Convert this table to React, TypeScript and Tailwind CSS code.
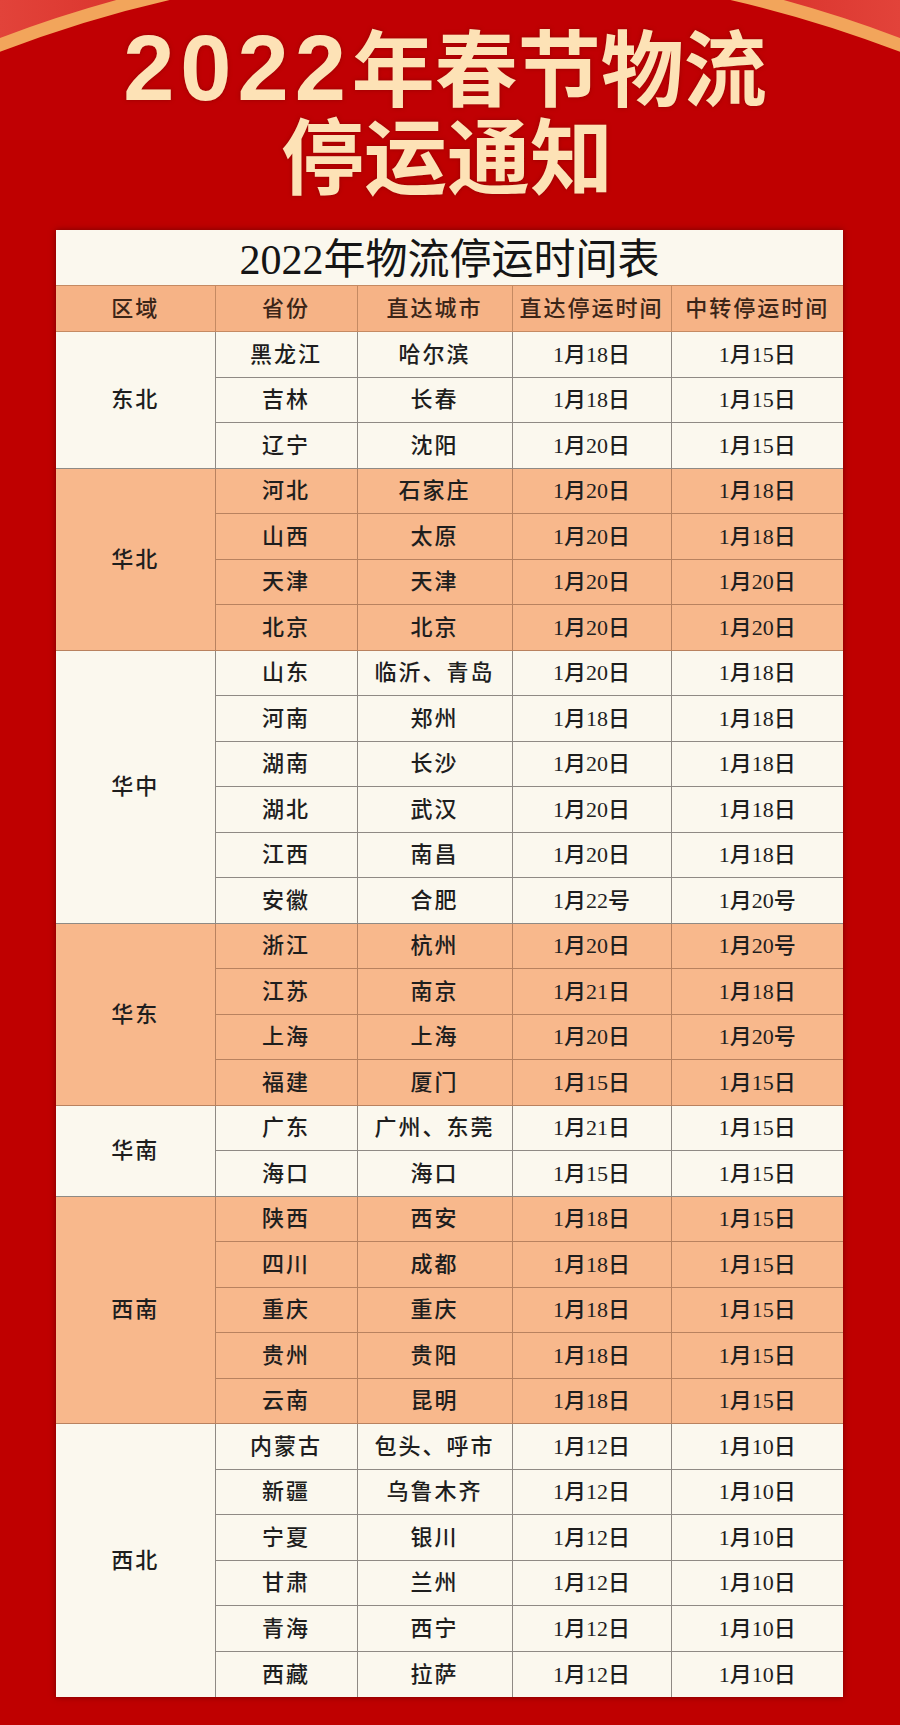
import React from "react"

type Row = [string, string, string, string]

interface Group {
  region: string
  tone: "cream" | "peach"
  rows: Row[]
}

const groups: Group[] = [
  {
    region: "东北",
    tone: "cream",
    rows: [
      ["黑龙江", "哈尔滨", "1月18日", "1月15日"],
      ["吉林", "长春", "1月18日", "1月15日"],
      ["辽宁", "沈阳", "1月20日", "1月15日"],
    ],
  },
  {
    region: "华北",
    tone: "peach",
    rows: [
      ["河北", "石家庄", "1月20日", "1月18日"],
      ["山西", "太原", "1月20日", "1月18日"],
      ["天津", "天津", "1月20日", "1月20日"],
      ["北京", "北京", "1月20日", "1月20日"],
    ],
  },
  {
    region: "华中",
    tone: "cream",
    rows: [
      ["山东", "临沂、青岛", "1月20日", "1月18日"],
      ["河南", "郑州", "1月18日", "1月18日"],
      ["湖南", "长沙", "1月20日", "1月18日"],
      ["湖北", "武汉", "1月20日", "1月18日"],
      ["江西", "南昌", "1月20日", "1月18日"],
      ["安徽", "合肥", "1月22号", "1月20号"],
    ],
  },
  {
    region: "华东",
    tone: "peach",
    rows: [
      ["浙江", "杭州", "1月20日", "1月20号"],
      ["江苏", "南京", "1月21日", "1月18日"],
      ["上海", "上海", "1月20日", "1月20号"],
      ["福建", "厦门", "1月15日", "1月15日"],
    ],
  },
  {
    region: "华南",
    tone: "cream",
    rows: [
      ["广东", "广州、东莞", "1月21日", "1月15日"],
      ["海口", "海口", "1月15日", "1月15日"],
    ],
  },
  {
    region: "西南",
    tone: "peach",
    rows: [
      ["陕西", "西安", "1月18日", "1月15日"],
      ["四川", "成都", "1月18日", "1月15日"],
      ["重庆", "重庆", "1月18日", "1月15日"],
      ["贵州", "贵阳", "1月18日", "1月15日"],
      ["云南", "昆明", "1月18日", "1月15日"],
    ],
  },
  {
    region: "西北",
    tone: "cream",
    rows: [
      ["内蒙古", "包头、呼市", "1月12日", "1月10日"],
      ["新疆", "乌鲁木齐", "1月12日", "1月10日"],
      ["宁夏", "银川", "1月12日", "1月10日"],
      ["甘肃", "兰州", "1月12日", "1月10日"],
      ["青海", "西宁", "1月12日", "1月10日"],
      ["西藏", "拉萨", "1月12日", "1月10日"],
    ],
  },
]

const headers = ["区域", "省份", "直达城市", "直达停运时间", "中转停运时间"]

// top decoration: big circle with an orange rim
function TopArc() {
  return (
    <svg className="absolute left-0 top-0" width="900" height="140" viewBox="0 0 900 140">
      <defs>
        <linearGradient id="corner" x1="0" y1="0" x2="1" y2="0">
          <stop offset="0" stopColor="#e2433a" />
          <stop offset="0.5" stopColor="#c8100e" />
          <stop offset="1" stopColor="#e2433a" />
        </linearGradient>
      </defs>
      <rect width="900" height="140" fill="url(#corner)" />
      <circle cx="450" cy="1225" r="1263" fill="#c00003" stroke="#f2a55b" strokeWidth="13" />
    </svg>
  )
}

export default function App() {
  const serifCjk = { fontFamily: '"Liberation Serif", "Noto Sans CJK SC", serif' }

  return (
    <div className="relative w-[900px] min-h-[1725px] bg-[#bf0000] overflow-hidden">
      <TopArc />

      {/* Title */}
      <div
        className="relative pt-[22px] text-center font-semibold text-[#fde2b6] text-[83px] [text-shadow:0_0_4px_rgba(120,0,0,0.6)]"
        style={{ fontFamily: '"Liberation Sans", "Noto Sans CJK SC", sans-serif' }}
      >
        <div className="h-[92px] leading-[92px] pr-[10px]">
          <span className="text-[92px] tracking-[6px] leading-[92px]">2022</span>年春节物流
        </div>
        <div className="h-[92px] leading-[92px] pr-[6px]">停运通知</div>
      </div>

      {/* Table panel */}
      <div className="relative mt-[24px] ml-[56px] w-[787px] bg-[#fbf8ee] shadow-[0_0_6px_rgba(60,0,0,0.55)]" style={serifCjk}>
        <div className="h-[55px] flex items-center justify-center text-[42px] text-[#151515] leading-none pt-[4px]">
          2022年物流停运时间表
        </div>
        <table className="w-[787px] table-fixed border-collapse text-[22px] text-[#1e1e1e] font-medium">
          <colgroup>
            <col className="w-[159px]" />
            <col className="w-[142px]" />
            <col className="w-[155px]" />
            <col className="w-[159px]" />
            <col className="w-[172px]" />
          </colgroup>
          <thead>
            <tr className="h-[46px] bg-[#f6b386]">
              {headers.map((h, i) => (
                <th
                  key={h}
                  className={`font-medium text-[#3b2518] tracking-[2px] border-t border-b border-[#c58a62] ${
                    i > 0 ? "border-l" : ""
                  }`}
                >
                  {h}
                </th>
              ))}
            </tr>
          </thead>
          <tbody>
            {groups.map((g, gi) => {
              const bg = g.tone === "peach" ? "bg-[#f8b88c]" : "bg-[#fbf8ee]"
              const line = g.tone === "peach" ? "border-[#b9825f]" : "border-[#8f8a84]"
              const last = gi === groups.length - 1
              return g.rows.map((r, ri) => (
                <tr key={g.region + r[0]} className={`h-[45.5px] ${bg}`}>
                  {ri === 0 && (
                    <td
                      rowSpan={g.rows.length}
                      className={`text-center tracking-[2px] ${last ? "" : "border-b"} ${line}`}
                    >
                      {g.region}
                    </td>
                  )}
                  {r.map((c, ci) => (
                    <td
                      key={ci}
                      className={`text-center border-l ${line} ${
                        last && ri === g.rows.length - 1 ? "" : "border-b"
                      } ${ci < 2 ? "tracking-[2px]" : ""}`}
                    >
                      {c}
                    </td>
                  ))}
                </tr>
              ))
            })}
          </tbody>
        </table>
      </div>
    </div>
  )
}
